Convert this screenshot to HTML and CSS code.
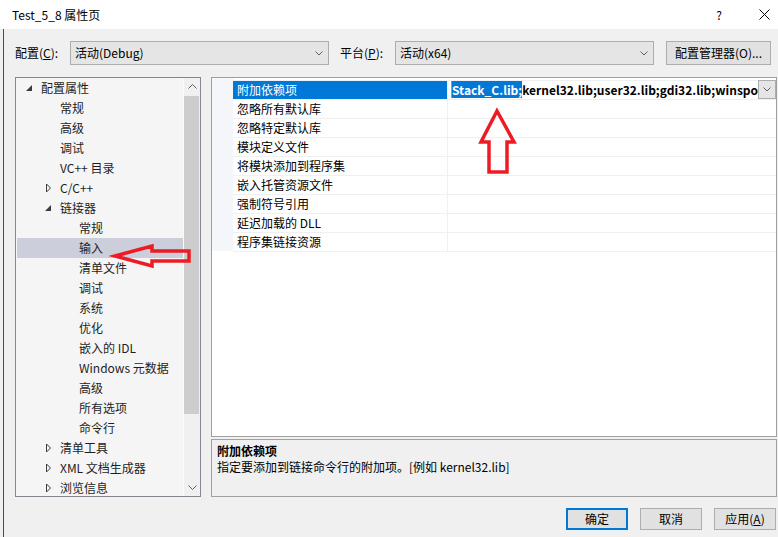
FILE: index.html
```html
<!DOCTYPE html>
<html>

<head>
    <meta charset="utf-8">
    <link rel="stylesheet" href="styles.css">
</head>

<body>
    <div class="window">
        <!-- Title bar -->
        <div class="titlebar">
            <span class="title">Test_5_8 属性页</span>
            <span class="tb-help">?</span>
            <svg class="tb-close" width="11" height="11" viewBox="0 0 11 11">
                <path d="M0.5 0.5L10.5 10.5M10.5 0.5L0.5 10.5" stroke="#000" stroke-width="1" fill="none" />
            </svg>
        </div>

        <div class="client">
            <!-- Configuration row -->
            <div class="config-row">
                <span class="lbl">配置(<u>C</u>):</span>
                <div class="combo">
                    <span>活动(Debug)</span>
                    <svg width="8" height="5" viewBox="0 0 8 5"><path d="M0.5 0.5L4 4L7.5 0.5" stroke="#606060" fill="none" /></svg>
                </div>
                <span class="lbl lbl-platform">平台(<u>P</u>):</span>
                <div class="combo">
                    <span>活动(x64)</span>
                    <svg width="8" height="5" viewBox="0 0 8 5"><path d="M0.5 0.5L4 4L7.5 0.5" stroke="#606060" fill="none" /></svg>
                </div>
                <button class="btn btn-manager">配置管理器(O)...</button>
            </div>

            <div class="panes">
                <!-- Tree -->
                <div class="tree">
                    <ul class="tree-list">
                        <li class="lv1"><span class="tg"><svg width="7" height="7" viewBox="0 0 7 7"><path d="M6 0V6H0Z" fill="#3c3c3c" /></svg></span>配置属性</li>
                        <li class="lv2"><span class="tg"></span>常规</li>
                        <li class="lv2"><span class="tg"></span>高级</li>
                        <li class="lv2"><span class="tg"></span>调试</li>
                        <li class="lv2"><span class="tg"></span>VC++ 目录</li>
                        <li class="lv2"><span class="tg"><svg width="7" height="10" viewBox="0 0 7 10"><path d="M1.5 1L5.5 5L1.5 9Z" fill="none" stroke="#3c3c3c" /></svg></span>C/C++</li>
                        <li class="lv2"><span class="tg"><svg width="7" height="7" viewBox="0 0 7 7"><path d="M6 0V6H0Z" fill="#3c3c3c" /></svg></span>链接器</li>
                        <li class="lv3"><span class="tg"></span>常规</li>
                        <li class="lv3 sel"><span class="tg"></span>输入</li>
                        <li class="lv3"><span class="tg"></span>清单文件</li>
                        <li class="lv3"><span class="tg"></span>调试</li>
                        <li class="lv3"><span class="tg"></span>系统</li>
                        <li class="lv3"><span class="tg"></span>优化</li>
                        <li class="lv3"><span class="tg"></span>嵌入的 IDL</li>
                        <li class="lv3"><span class="tg"></span>Windows 元数据</li>
                        <li class="lv3"><span class="tg"></span>高级</li>
                        <li class="lv3"><span class="tg"></span>所有选项</li>
                        <li class="lv3"><span class="tg"></span>命令行</li>
                        <li class="lv2"><span class="tg"><svg width="7" height="10" viewBox="0 0 7 10"><path d="M1.5 1L5.5 5L1.5 9Z" fill="none" stroke="#3c3c3c" /></svg></span>清单工具</li>
                        <li class="lv2"><span class="tg"><svg width="7" height="10" viewBox="0 0 7 10"><path d="M1.5 1L5.5 5L1.5 9Z" fill="none" stroke="#3c3c3c" /></svg></span>XML 文档生成器</li>
                        <li class="lv2"><span class="tg"><svg width="7" height="10" viewBox="0 0 7 10"><path d="M1.5 1L5.5 5L1.5 9Z" fill="none" stroke="#3c3c3c" /></svg></span>浏览信息</li>
                    </ul>
                    <div class="vscroll">
                        <div class="sb-btn"><svg width="9" height="5" viewBox="0 0 9 5"><path d="M0.5 4.5L4.5 0.5L8.5 4.5" stroke="#606060" fill="none" /></svg></div>
                        <div class="sb-track"><div class="sb-thumb"></div></div>
                        <div class="sb-btn"><svg width="9" height="5" viewBox="0 0 9 5"><path d="M0.5 0.5L4.5 4.5L8.5 0.5" stroke="#606060" fill="none" /></svg></div>
                    </div>
                </div>

                <!-- Property grid + description -->
                <div class="right">
                    <div class="grid">
                        <div class="gutter"></div>
                        <div class="prows">
                            <div class="prow sel">
                                <div class="pname">附加依赖项</div>
                                <div class="pval">
                                    <div class="edit"><span class="hl">Stack_C.lib;</span>kernel32.lib;user32.lib;gdi32.lib;winspool.lib</div>
                                    <div class="dd-btn"><svg width="8" height="5" viewBox="0 0 8 5"><path d="M0.5 0.5L4 4L7.5 0.5" stroke="#606060" fill="none" /></svg></div>
                                </div>
                            </div>
                            <div class="prow"><div class="pname">忽略所有默认库</div><div class="pval"></div></div>
                            <div class="prow"><div class="pname">忽略特定默认库</div><div class="pval"></div></div>
                            <div class="prow"><div class="pname">模块定义文件</div><div class="pval"></div></div>
                            <div class="prow"><div class="pname">将模块添加到程序集</div><div class="pval"></div></div>
                            <div class="prow"><div class="pname">嵌入托管资源文件</div><div class="pval"></div></div>
                            <div class="prow"><div class="pname">强制符号引用</div><div class="pval"></div></div>
                            <div class="prow"><div class="pname">延迟加载的 DLL</div><div class="pval"></div></div>
                            <div class="prow last"><div class="pname">程序集链接资源</div><div class="pval"></div></div>
                        </div>
                    </div>
                    <div class="desc">
                        <div class="desc-title">附加依赖项</div>
                        <div>指定要添加到链接命令行的附加项。[例如 kernel32.lib]</div>
                    </div>
                </div>
            </div>

            <!-- Dialog buttons -->
            <div class="buttons">
                <button class="btn btn-default">确定</button>
                <button class="btn">取消</button>
                <button class="btn">应用(<u>A</u>)</button>
            </div>
        </div>

        <!-- red annotation arrows drawn over the dialog -->
        <svg class="marks" width="778" height="537" viewBox="0 0 778 537">
            <path d="M497 111L514 142H507V172H489V142H481Z" fill="none" stroke="#ed1c24" stroke-width="3.5" stroke-linejoin="miter" />
            <path d="M115 256L152 246V251H189V261H152V266Z" fill="none" stroke="#ed1c24" stroke-width="3.5" stroke-linejoin="miter" />
        </svg>
    </div>
</body>

</html>
```

FILE: styles.css
```css
* {
    box-sizing: border-box;
}

body {
    margin: 0;
    font-family: "Noto Sans CJK SC", sans-serif;
    font-size: 12px;
    color: #000;
}

.window {
    position: relative;
    width: 778px;
    height: 537px;
    overflow: hidden;
    background: #f0f0f0;
}

.titlebar {
    height: 29px;
    background: #fff;
    display: flex;
    align-items: center;
    padding-left: 12px;
    padding-right: 8px;
}

.title {
    flex: 1;
    line-height: 16px;
}

.tb-help {
    line-height: 16px;
    margin-right: 37px;
}

.client {
    height: 508px;
    padding: 12px 0 0 15px;
    background: linear-gradient(to right, #f0f0f0 3px, #4a4a4a 3px, #4a4a4a 4px, #f0f0f0 4px);
}

.config-row {
    display: flex;
    align-items: center;
    height: 24px;
}

.lbl {
    width: 55px;
    line-height: 16px;
}

.lbl-platform {
    margin-left: 11px;
}

.combo {
    width: 259px;
    height: 24px;
    border: 1px solid #adadad;
    background: #e5e5e5;
    display: flex;
    align-items: center;
    justify-content: space-between;
    padding: 0 5px 0 4px;
    line-height: 16px;
}

.btn {
    font-family: inherit;
    font-size: 12px;
    color: #000;
    background: #e1e1e1;
    border: 1px solid #adadad;
    padding: 0;
    line-height: 16px;
}

.btn-manager {
    margin-left: 12px;
    width: 105px;
    height: 24px;
}

.panes {
    display: flex;
    gap: 10px;
    margin-top: 12px;
    height: 420px;
}

/* tree */
.tree {
    width: 186px;
    border: 1px solid #828790;
    background: #f5f5f5;
    display: flex;
    overflow: hidden;
}

.tree-list {
    flex: 1;
    list-style: none;
    margin: 0;
    padding: 0;
    overflow: hidden;
}

.tree-list li {
    height: 20px;
    line-height: 20px;
    display: flex;
    align-items: center;
    white-space: nowrap;
    color: #1e1e1e;
}

.tree-list .tg {
    width: 19px;
    height: 20px;
    display: flex;
    align-items: center;
    padding-left: 4px;
}

.lv1 {
    padding-left: 6px;
}

.lv2 {
    padding-left: 25px;
}

.lv3 {
    padding-left: 44px;
}

.tree-list .sel {
    background: #cccedb;
    margin-left: 1px;
    padding-left: 43px;
}

.vscroll {
    width: 17px;
    display: flex;
    flex-direction: column;
    background: #f0f0f0;
    border-left: 1px solid #fafafa;
}

.sb-btn {
    height: 17px;
    display: flex;
    align-items: center;
    justify-content: center;
}

.sb-track {
    flex: 1;
    padding: 1px 0 0 0;
}

.sb-thumb {
    height: 318px;
    background: #cdcdcd;
    margin: 0 1px 0 0;
}

/* property grid */
.right {
    width: 566px;
    display: flex;
    flex-direction: column;
    gap: 2px;
}

.grid {
    height: 360px;
    border: 1px solid #a0a0a0;
    background: #fff;
    display: flex;
    align-items: flex-start;
}

.gutter {
    flex: 0 0 21px;
    height: 173px;
    background: #f4f6fa;
}

.prows {
    flex: 1;
    min-width: 0;
    margin-top: 2px;
}

.prow {
    display: flex;
    height: 19px;
    border-top: 1px solid #eef0f4;
}

.prow.last {
    height: 20px;
    border-bottom: 1px solid #eef0f4;
}

.pname {
    flex: 0 0 215px;
    padding-left: 4px;
    line-height: 18px;
    border-right: 1px solid #eef0f4;
    white-space: nowrap;
}

.prow.sel .pname {
    background: #0078d7;
    color: #fff;
}

.pval {
    flex: 1;
    display: flex;
    min-width: 0;
}

.edit {
    flex: 1;
    min-width: 0;
    overflow: hidden;
    white-space: nowrap;
    padding-left: 3px;
    font-weight: bold;
    line-height: 18px;
}

.hl {
    background: #0078d7;
    color: #fff;
    border-left: 1px solid #e8862a;
}

.dd-btn {
    flex: 0 0 18px;
    height: 19px;
    margin-top: -1px;
    border: 1px solid #adadad;
    background: #e5e5e5;
    display: flex;
    align-items: center;
    justify-content: center;
}

.desc {
    height: 58px;
    border: 1px solid #a0a0a0;
    background: #f0f0f0;
    padding: 3px 5px;
    line-height: 16px;
}

.desc-title {
    font-weight: bold;
}

.buttons {
    display: flex;
    justify-content: flex-end;
    gap: 12px;
    margin-top: 11px;
    padding-right: 2px;
}

.buttons .btn {
    width: 62px;
    height: 22px;
}

.buttons .btn-default {
    border: 2px solid #0078d7;
}

.marks {
    position: absolute;
    left: 0;
    top: 0;
    pointer-events: none;
}
```
